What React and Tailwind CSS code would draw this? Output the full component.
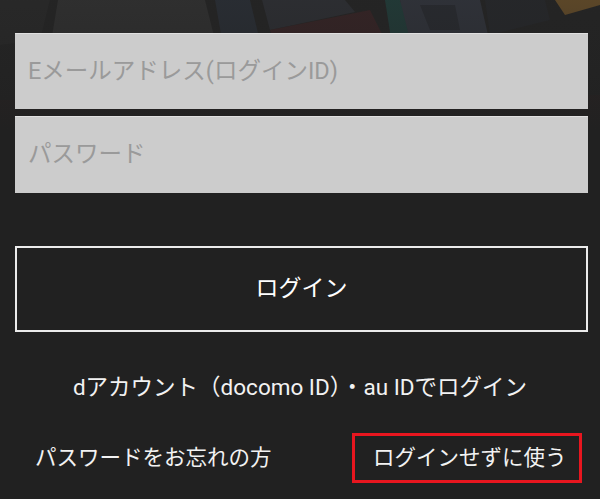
import React from 'react';

const Banner = () => (
    <svg
        className="absolute left-0 top-0 w-full h-[130px]"
        viewBox="0 0 600 130"
        preserveAspectRatio="none"
    >
        <defs>
            <linearGradient id="fade" x1="0" y1="0" x2="0" y2="1">
                <stop offset="0" stopColor="#212121" stopOpacity="0.35" />
                <stop offset="0.5" stopColor="#212121" stopOpacity="0.55" />
                <stop offset="1" stopColor="#212121" stopOpacity="1" />
            </linearGradient>
        </defs>
        <rect x="0" y="0" width="600" height="130" fill="#262626" />
        <polygon points="0,0 50,0 40,40 0,45" fill="#2c2c2c" />
        <polygon points="58,0 205,0 215,40 50,48" fill="#363636" />
        <polygon points="215,0 250,0 258,33 222,40" fill="#2d333c" />
        <polygon points="262,0 345,0 355,12 270,30" fill="#32343a" />
        <polygon points="270,30 370,10 385,40 280,60" fill="#3e2527" />
        <polygon points="385,0 400,0 415,40 392,45" fill="#224541" />
        <polygon points="400,0 480,0 488,35 410,40" fill="#363a44" />
        <polygon points="420,5 455,5 460,30 430,30" fill="#2b2e35" />
        <polygon points="485,0 545,0 550,20 490,35" fill="#282a2e" />
        <polygon points="555,0 600,0 600,5 565,15" fill="#7a5a2c" />
        <polygon points="0,100 600,95 600,130 0,130" fill="#3a1f20" opacity="0.5" />
        <rect x="0" y="0" width="600" height="130" fill="url(#fade)" />
    </svg>
);

const App = () => {
    return (
        <div className="min-h-screen bg-[#212121] font-['Roboto','Noto_Sans_CJK_JP',sans-serif] text-[#f2f2f2]">
            <div className="relative pt-[33px] pl-[15px] pr-[12px]">
                <Banner />
                <div className="relative flex flex-col gap-[7px]">
                    <div className="h-[76px] bg-[#cccccc] border-t border-[#e0e0e0] flex items-center pl-[13px] text-[23.5px] text-[#9a9a9a]">
                        Eメールアドレス(ログインID)
                    </div>
                    <div className="h-[77px] bg-[#cccccc] border-t border-[#e0e0e0] flex items-center pl-[13px] text-[23.5px] text-[#9a9a9a]">
                        パスワード
                    </div>
                </div>
            </div>

            <div className="mt-[53px] ml-[15px] mr-[12px] h-[86px] border-2 border-[#ececec] flex items-center justify-center text-[23px] text-white">
                ログイン
            </div>

            <div className="mt-[36px] h-[40px] flex items-center justify-center text-[22.5px]">
                dアカウント（docomo ID）・au IDでログイン
            </div>

            <div className="mt-[25px] flex items-center justify-between pl-[35px] pr-[18px]">
                <span className="text-[21.5px]">パスワードをお忘れの方</span>
                <div className="w-[230px] h-[50px] border-[3px] border-[#e8161f] flex items-center pl-[18px] text-[21.5px]">
                    ログインせずに使う
                </div>
            </div>
        </div>
    );
};

export default App;
